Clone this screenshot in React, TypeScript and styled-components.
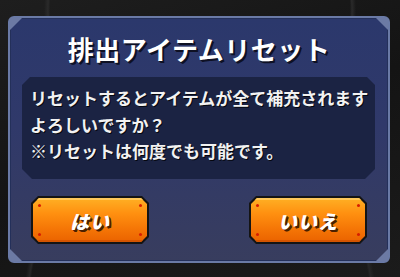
import React from 'react'
import styled, { createGlobalStyle } from 'styled-components'

const GlobalStyle = createGlobalStyle`
  html, body {
    margin: 0;
    padding: 0;
    background: #161616;
  }
  body {
    font-family: "Noto Sans CJK JP", "Noto Sans", sans-serif;
  }
`

const Screen = styled.div`
  width: 400px;
  height: 277px;
  box-sizing: border-box;
  padding: 16px 10px 14px 8px;
  overflow: hidden;
  background:
    radial-gradient(circle at 200px 10px, transparent 150px, #2a2a2a 152px, transparent 156px),
    radial-gradient(circle at 200px 300px, transparent 170px, #262626 172px, transparent 176px),
    linear-gradient(160deg, #1e1e1e 0%, #141414 50%, #1b1b1b 100%);
`

const Panel = styled.div`
  position: relative;
  height: 100%;
  box-sizing: border-box;
  border: 2px solid #6a7aa6;
  border-radius: 6px;
  background: linear-gradient(180deg, #2b386c 0%, #30396a 45%, #383d5e 100%);
  box-shadow: inset 0 0 0 1px #24305a;
  display: flex;
  flex-direction: column;
  align-items: stretch;
`

const Corner = styled.span<{ $pos: 'tl' | 'tr' | 'bl' | 'br' }>`
  position: absolute;
  width: 12px;
  height: 12px;
  background: #6c7aa4;
  ${({ $pos }) =>
    $pos === 'tl'
      ? 'top: 0; left: 0; clip-path: polygon(0 0, 100% 0, 0 100%);'
      : $pos === 'tr'
      ? 'top: 0; right: 0; clip-path: polygon(0 0, 100% 0, 100% 100%);'
      : $pos === 'bl'
      ? 'bottom: 0; left: 0; clip-path: polygon(0 0, 0 100%, 100% 100%);'
      : 'bottom: 0; right: 0; clip-path: polygon(100% 0, 100% 100%, 0 100%);'}
`

const Title = styled.h1`
  margin: 0;
  height: 58px;
  display: flex;
  align-items: center;
  justify-content: center;
  padding-top: 1px;
  font-size: 26px;
  font-weight: 700;
  color: #ffffff;
  letter-spacing: 0.5px;
  text-shadow: 2px 2px 0 #0e1124, 1px 1px 0 #0e1124;
`

const MessageBox = styled.div`
  margin: 0 13px 0 12px;
  height: 102px;
  box-sizing: border-box;
  padding: 8px 8px 0 8px;
  background: #1b2343;
  clip-path: polygon(
    8px 0, calc(100% - 8px) 0, 100% 8px, 100% calc(100% - 10px),
    calc(100% - 10px) 100%, 10px 100%, 0 calc(100% - 10px), 0 8px
  );
`

const Line = styled.p`
  margin: 0;
  font-size: 17px;
  line-height: 26.5px;
  font-weight: 700;
  color: #f2f2f2;
  white-space: nowrap;
  text-shadow: 1px 1px 0 #05070f;
`

const ButtonRow = styled.div`
  display: flex;
  justify-content: space-between;
  padding: 17px 21px 0 21px;
`

const ButtonFrame = styled.button`
  width: 118px;
  height: 48px;
  padding: 2px;
  border: none;
  background: #141414;
  cursor: pointer;
  clip-path: polygon(
    7px 0, calc(100% - 7px) 0, 100% 7px, 100% calc(100% - 7px),
    calc(100% - 7px) 100%, 7px 100%, 0 calc(100% - 7px), 0 7px
  );
`

const ButtonFace = styled.span`
  position: relative;
  display: flex;
  align-items: center;
  justify-content: center;
  width: 100%;
  height: 100%;
  background: linear-gradient(180deg, #ffb024 0%, #ff9010 35%, #f57606 70%, #ea6200 100%);
  box-shadow: inset 0 2px 0 #ffc85a, inset 0 -2px 0 #d45400;
  clip-path: polygon(
    6px 0, calc(100% - 6px) 0, 100% 6px, 100% calc(100% - 6px),
    calc(100% - 6px) 100%, 6px 100%, 0 calc(100% - 6px), 0 6px
  );
  font-family: "Noto Sans CJK JP", sans-serif;
  font-size: 19px;
  font-weight: 900;
  font-style: italic;
  color: #ffffff;
  letter-spacing: 1px;
  text-shadow: 2px 2px 0 #4a2000, 1px 1px 0 #4a2000;
`

const Rivet = styled.i<{ $x: 'left' | 'right'; $y: 'top' | 'bottom' }>`
  position: absolute;
  width: 3px;
  height: 3px;
  border-radius: 50%;
  background: #d61e00;
  ${({ $x }) => $x}: 5px;
  ${({ $y }) => $y}: 6px;
`

function OrangeButton({ label }: { label: string }) {
  return (
    <ButtonFrame>
      <ButtonFace>
        <Rivet $x="left" $y="top" />
        <Rivet $x="right" $y="top" />
        <Rivet $x="left" $y="bottom" />
        <Rivet $x="right" $y="bottom" />
        {label}
      </ButtonFace>
    </ButtonFrame>
  )
}

export default function App() {
  return (
    <>
      <GlobalStyle />
      <Screen>
        <Panel>
          <Corner $pos="tl" />
          <Corner $pos="tr" />
          <Corner $pos="bl" />
          <Corner $pos="br" />
          <Title>排出アイテムリセット</Title>
          <MessageBox>
            <Line>リセットするとアイテムが全て補充されます</Line>
            <Line>よろしいですか？</Line>
            <Line>※リセットは何度でも可能です。</Line>
          </MessageBox>
          <ButtonRow>
            <OrangeButton label="はい" />
            <OrangeButton label="いいえ" />
          </ButtonRow>
        </Panel>
      </Screen>
    </>
  )
}
